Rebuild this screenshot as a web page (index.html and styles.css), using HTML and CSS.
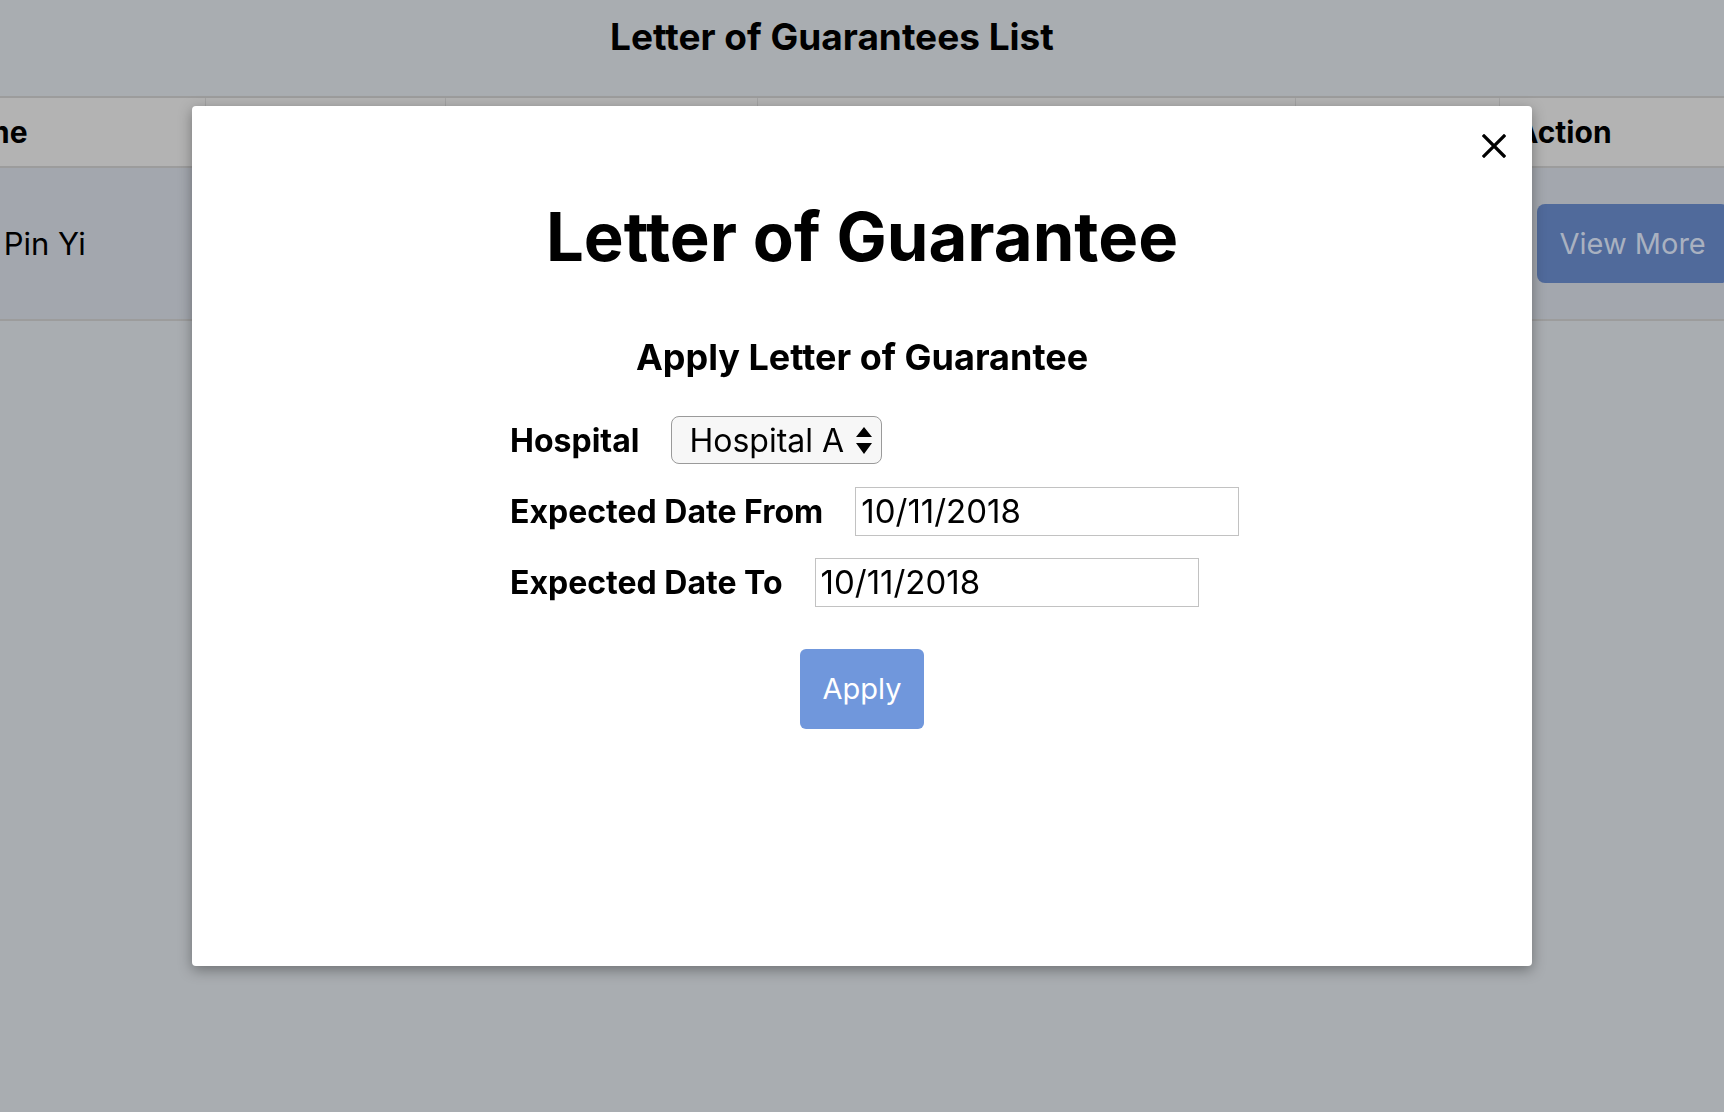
FILE: index.html
```html
<!DOCTYPE html>
<html lang="en">
<head>
<meta charset="utf-8">
<title>Letter of Guarantees List</title>
<link rel="stylesheet" href="styles.css">
</head>
<body>
<div class="page">
  <h1 class="page-title">Letter of Guarantees List</h1>
  <table class="log-table">
    <colgroup>
      <col class="c-name"><col class="c-nric"><col class="c-hosp"><col class="c-period"><col class="c-status"><col class="c-action">
    </colgroup>
    <thead>
      <tr><th>Name</th><th>NRIC</th><th>Hospital</th><th>Period</th><th>Status</th><th>Action</th></tr>
    </thead>
    <tbody>
      <tr>
        <td>Tan Pin Yi</td><td></td><td></td><td></td><td></td>
        <td class="action-cell"><button class="view-btn" type="button">View More</button></td>
      </tr>
    </tbody>
  </table>
</div>

<div class="backdrop">
  <div class="modal">
    <button class="close-btn" type="button" aria-label="Close">
      <svg width="24" height="24" viewBox="0 0 24 24"><path d="M2 2 L22 22 M22 2 L2 22" stroke="#000" stroke-width="3.2" stroke-linecap="square" fill="none"/></svg>
    </button>
    <h2 class="modal-title">Letter of Guarantee</h2>
    <h3 class="modal-sub">Apply Letter of Guarantee</h3>
    <form class="apply-form">
      <div class="form-row">
        <label class="form-label">Hospital</label>
        <div class="select-box">
          <span>Hospital A</span>
          <svg width="16" height="27" viewBox="0 0 16 27"><path d="M8 0 L16 10 L0 10 Z M0 16 L16 16 L8 27 Z" fill="#000"/></svg>
        </div>
      </div>
      <div class="form-row">
        <label class="form-label">Expected Date From</label>
        <input class="text-input" type="text" value="10/11/2018">
      </div>
      <div class="form-row">
        <label class="form-label">Expected Date To</label>
        <input class="text-input" type="text" value="10/11/2018">
      </div>
      <button class="apply-btn" type="button">Apply</button>
    </form>
  </div>
</div>
</body>
</html>
```
FILE: styles.css
```css
html, body {
  margin: 0;
  padding: 0;
}
body {
  font-family: Inter, "Noto Sans", sans-serif;
  background: #a9adb1;
  color: #000;
}
.page {
  width: 1724px;
  height: 1112px;
  overflow: hidden;
}
.page-title {
  margin: 0;
  box-sizing: border-box;
  height: 96px;
  padding: 15px 60px 0 0;
  text-align: center;
  font-size: 37px;
  line-height: 1.2;
  font-weight: 700;
}
.log-table {
  border-collapse: collapse;
  table-layout: fixed;
  width: 1832px;
  margin-left: -75px;
}
.c-name { width: 280px; }
.c-nric { width: 240px; }
.c-hosp { width: 312px; }
.c-period { width: 538px; }
.c-status { width: 204px; }
.c-action { width: 258px; }
.log-table th {
  height: 68px;
  padding: 0 16px;
  background: #b3b3b3;
  border-top: 2px solid #9c9c9c;
  border-bottom: 2px solid #9c9c9c;
  border-left: 1px solid #a3a3a3;
  text-align: left;
  font-size: 30px;
  font-weight: 700;
  white-space: nowrap;
  overflow: hidden;
}
.log-table td {
  height: 151px;
  padding: 0 16px;
  background: #a3a7ae;
  border-bottom: 2px solid #9c9c9c;
  font-size: 31px;
  white-space: nowrap;
  overflow: hidden;
  vertical-align: middle;
}
.log-table td.action-cell {
  padding-left: 37px;
}
.view-btn {
  height: 79px;
  padding: 0 23px;
  border: none;
  border-radius: 8px;
  background: #506a9b;
  color: #a9b1c0;
  font-family: inherit;
  font-size: 29px;
}
.backdrop {
  position: fixed;
  inset: 0;
  display: flex;
  justify-content: center;
  align-items: flex-start;
  padding-top: 106px;
}
.modal {
  position: relative;
  box-sizing: border-box;
  width: 1340px;
  height: 860px;
  padding-top: 91px;
  background: #fff;
  border-radius: 4px;
  box-shadow: 0 4px 14px rgba(0, 0, 0, 0.35);
  text-align: center;
}
.close-btn {
  position: absolute;
  top: 28px;
  right: 26px;
  width: 24px;
  height: 24px;
  padding: 0;
  border: none;
  background: none;
  display: block;
}
.close-btn svg { display: block; }
.modal-title {
  margin: 0;
  font-size: 67px;
  line-height: 1.2;
  font-weight: 700;
}
.modal-sub {
  margin: 59px 0 0;
  font-size: 36px;
  line-height: 1.2;
  font-weight: 700;
}
.apply-form {
  width: 704px;
  margin: 36px auto 0;
  display: flex;
  flex-direction: column;
  gap: 22px;
  text-align: left;
}
.form-row {
  display: flex;
  align-items: center;
  gap: 32px;
  height: 49px;
}
.form-label {
  font-size: 32px;
  font-weight: 700;
  white-space: nowrap;
}
.select-box {
  box-sizing: border-box;
  width: 211px;
  height: 48px;
  display: flex;
  align-items: center;
  justify-content: space-between;
  padding: 0 9px 0 17px;
  border: 1px solid #9a9a9a;
  border-radius: 8px;
  background: #f7f7f7;
  font-size: 32px;
}
.text-input {
  box-sizing: border-box;
  width: 384px;
  height: 49px;
  margin: 0;
  padding: 0 5px;
  border: 1px solid #c2c2c2;
  border-radius: 0;
  background: #fff;
  font-family: inherit;
  font-size: 33px;
  color: #000;
}
.apply-btn {
  align-self: center;
  margin-top: 20px;
  width: 124px;
  height: 80px;
  border: none;
  border-radius: 6px;
  background: #7097dc;
  color: #fff;
  font-family: inherit;
  font-size: 29px;
}
```
